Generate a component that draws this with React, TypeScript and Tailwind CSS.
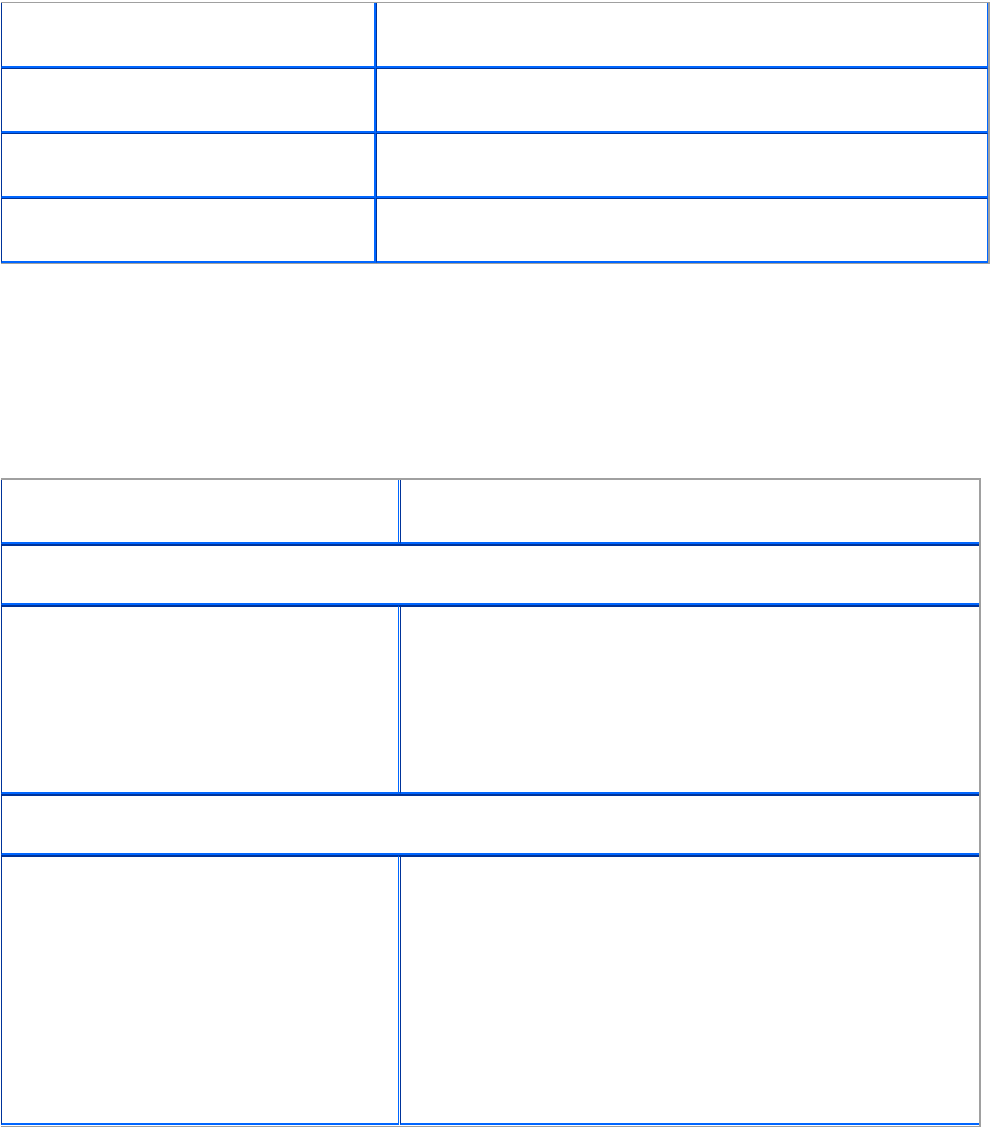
const bright = 'border-[#0066ff]'

function Table1() {
  const rows = [0, 1, 2, 3]
  return (
    <div className="ml-px mt-[2px] w-[989px] border-t border-r-2 border-b border-[#a0a0a0]">
      {rows.map(i => (
        <div key={i} className="flex h-[65px]">
          <div
            className={`w-[375px] border-l border-l-[#003399] border-r-2 border-r-[#0066ff] border-b-2 border-b-[#0066ff] ${
              i > 0 ? 'border-t border-t-[#003399]' : ''
            }`}
          />
          <div
            className={`flex-1 border-l border-l-[#003399] border-r border-r-[#0066ff] border-b-2 border-b-[#0066ff] ${
              i > 0 ? 'border-t border-t-[#003399]' : ''
            }`}
          />
        </div>
      ))}
    </div>
  )
}

function Table2() {
  return (
    <div className="ml-px mt-[214px] w-[980px] border-t-2 border-r-2 border-b border-[#a0a0a0] pb-px">
      {/* header row */}
      <div className="flex h-[64px]">
        <div className="w-[398px] border-l border-l-[#003399] border-r border-r-[#0066ff] border-b-2 border-b-[#0066ff]" />
        <div className="w-px border-b-2 border-b-[#0066ff]" />
        <div className="flex-1 border-l border-l-[#003399] border-b-2 border-b-[#0066ff]" />
      </div>
      {/* section bar */}
      <div className="h-[61px] border-l border-l-[#003399] border-t-2 border-t-[#003399] border-b-2 border-b-[#0066ff]" />
      <div className="flex h-[189px]">
        <div className="w-[398px] border-l border-l-[#003399] border-r border-r-[#0066ff] border-t-2 border-t-[#003399] border-b-2 border-b-[#0066ff]" />
        <div className="w-px border-t-2 border-t-[#003399] border-b-2 border-b-[#0066ff]" />
        <div className="flex-1 border-l border-l-[#003399] border-t-2 border-t-[#003399] border-b-2 border-b-[#0066ff]" />
      </div>
      <div className={`h-[61px] border-l border-l-[#003399] border-t-2 border-t-[#003399] border-b-2 ${bright}`} />
      <div className="flex h-[270px]">
        <div className="w-[398px] border-l border-l-[#003399] border-r border-r-[#0066ff] border-t-2 border-t-[#003399] border-b-2 border-b-[#0066ff]" />
        <div className="w-px border-t-2 border-t-[#003399]" />
        <div className="flex-1 border-l border-l-[#003399] border-t-2 border-t-[#003399] border-b-2 border-b-[#0066ff]" />
      </div>
    </div>
  )
}

export default function App() {
  return (
    <div className="w-[990px] h-[1127px] bg-white overflow-hidden">
      <Table1 />
      <Table2 />
    </div>
  )
}
